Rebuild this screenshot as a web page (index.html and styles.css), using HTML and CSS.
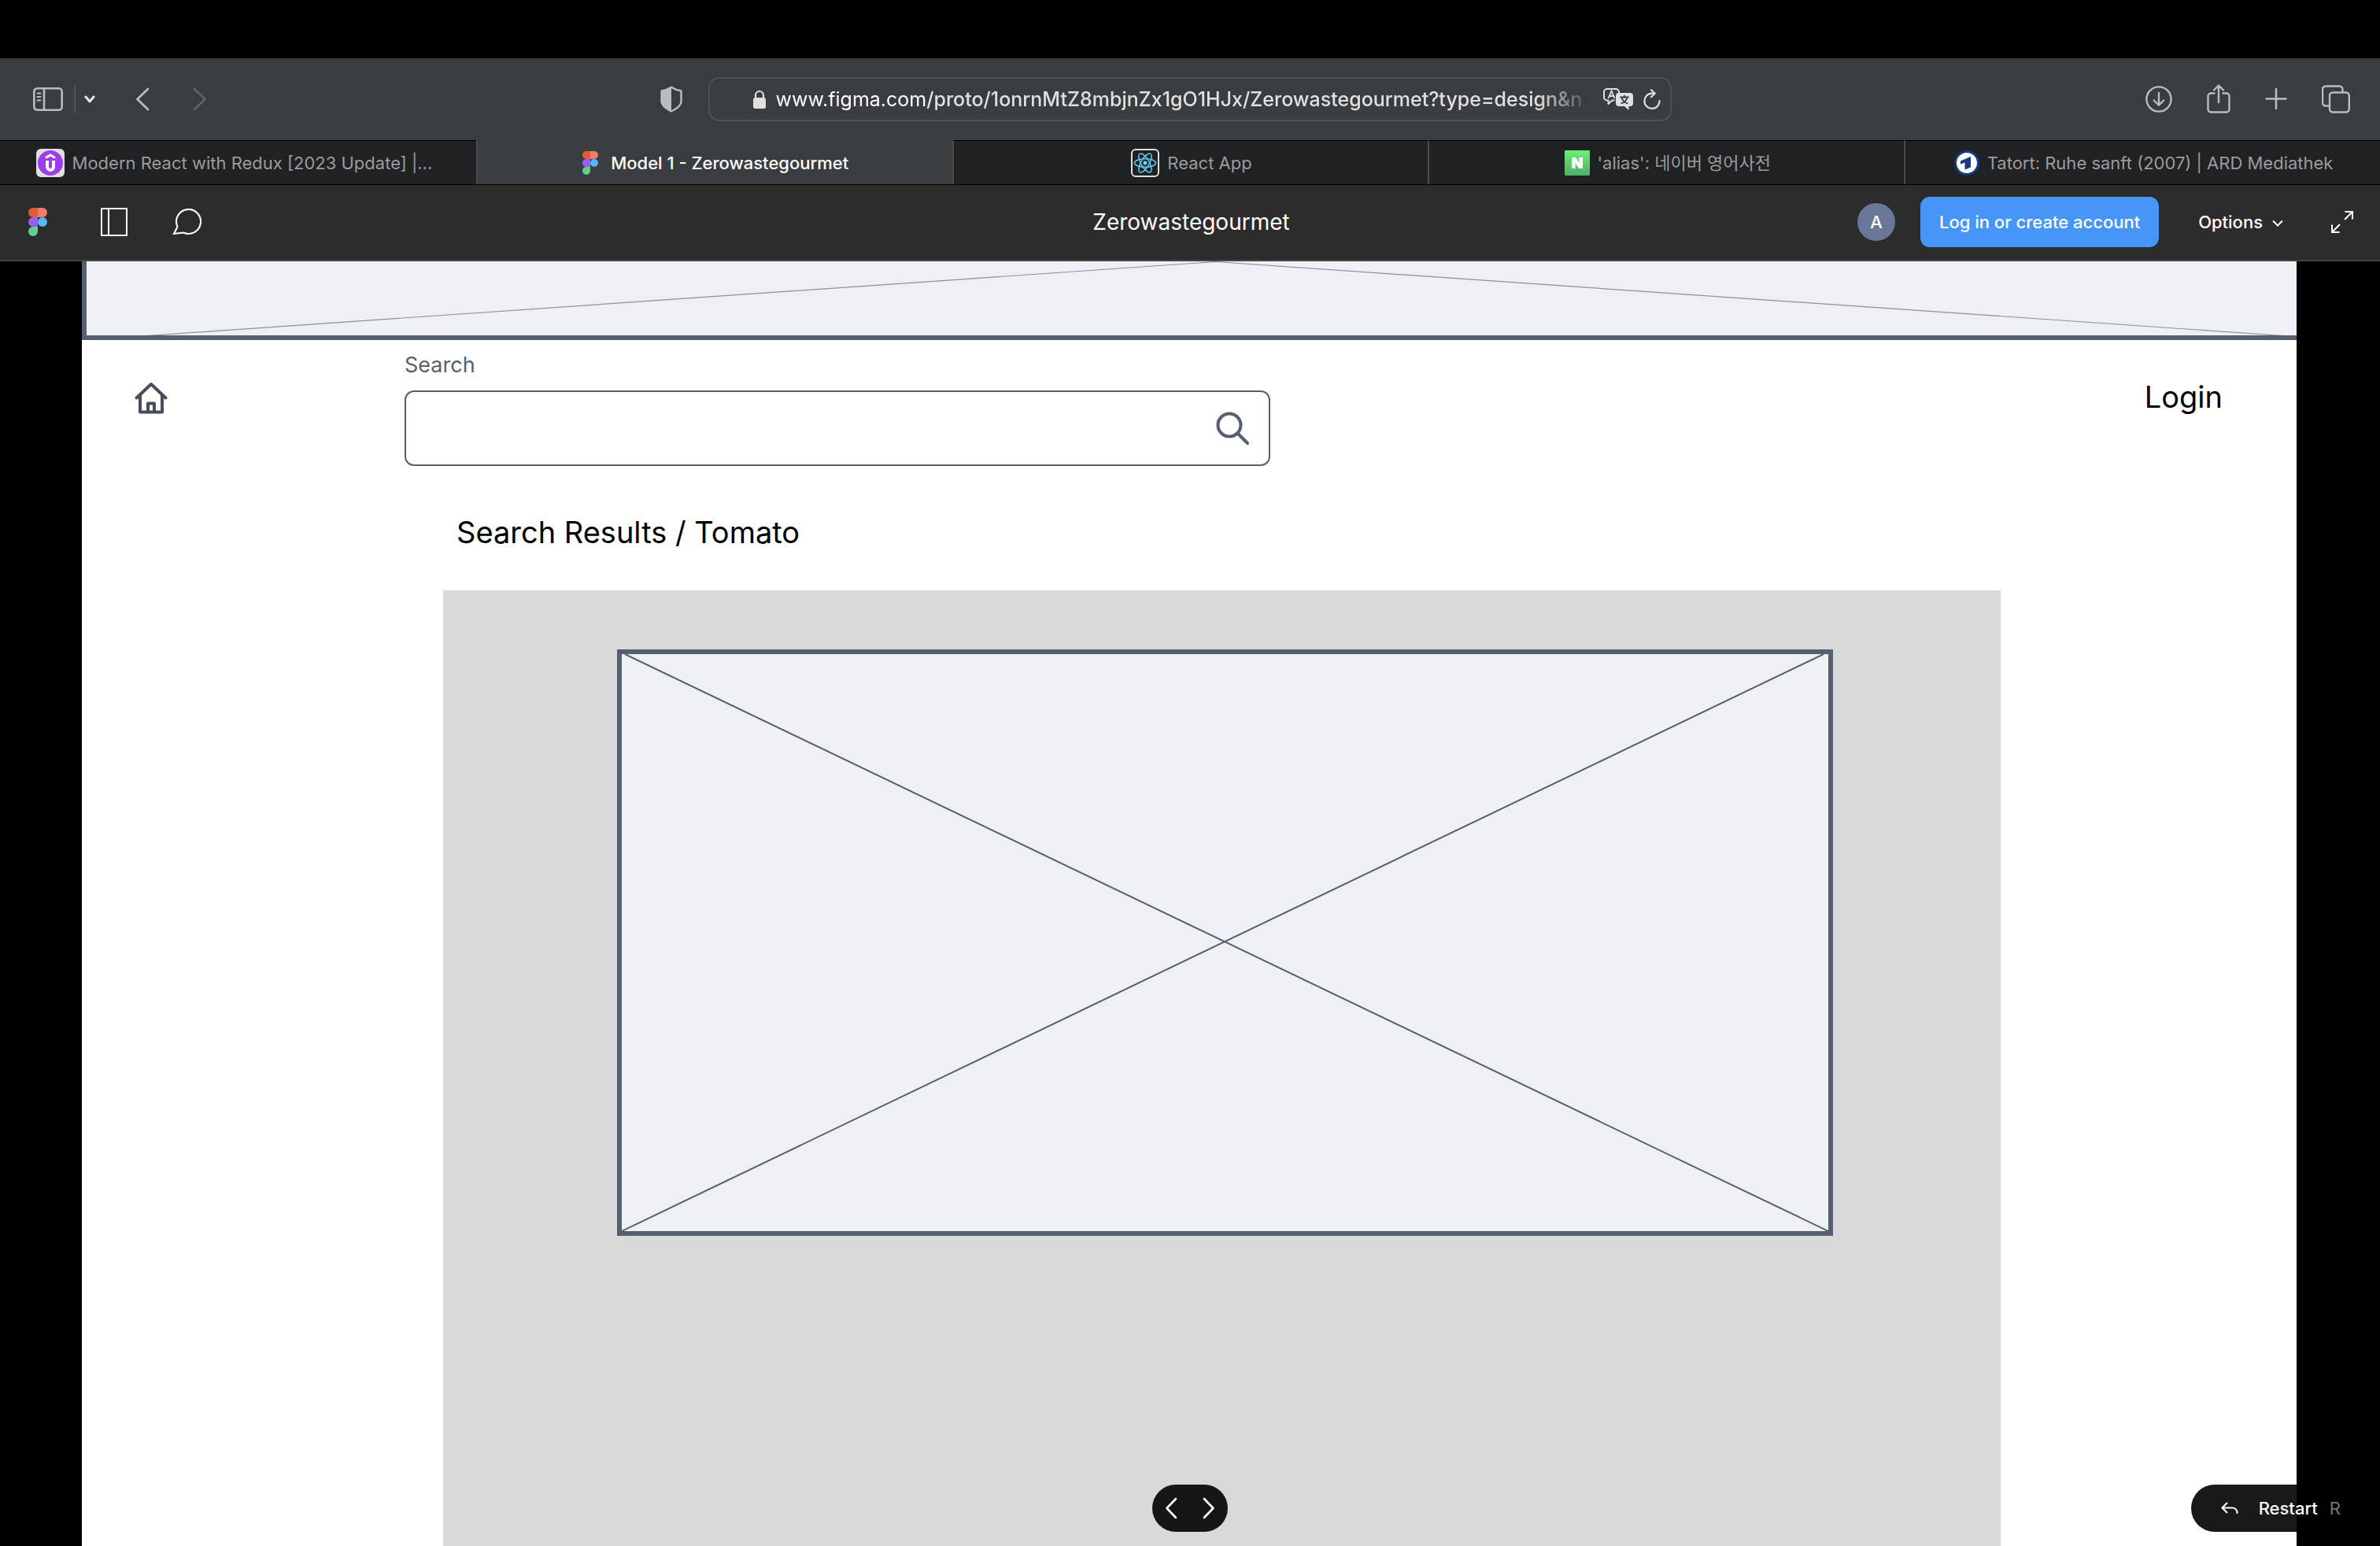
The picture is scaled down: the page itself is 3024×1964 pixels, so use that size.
FILE: index.html
```html
<!DOCTYPE html>
<html lang="en">
<head>
<meta charset="utf-8">
<title>Model 1 - Zerowastegourmet</title>
<link rel="stylesheet" href="styles.css">
</head>
<body>
<svg class="defs" width="0" height="0" aria-hidden="true">
  <symbol id="figma" viewBox="0 0 24 36">
    <path fill="#e25b32" d="M6 0h6v12H6A6 6 0 0 1 6 0z"/><path fill="#f07c6b" d="M12 0h6a6 6 0 0 1 0 12h-6z"/>
    <path fill="#9b5cf6" d="M6 12h6v12H6a6 6 0 0 1 0-12z"/><circle fill="#57b6f9" cx="18" cy="18" r="6"/>
    <path fill="#60cf8b" d="M6 24h6v6a6 6 0 1 1-6-6z"/>
  </symbol>
</svg>

<header class="browser">
  <div class="toolbar">
    <div class="tools tools-left">
      <button class="icon-btn" aria-label="Sidebar"><svg width="40" height="32" viewBox="0 0 40 32" fill="none" stroke="#b9bdbf" stroke-width="2.6"><rect x="2.3" y="2.3" width="35.4" height="27.4" rx="4"/><path d="M15 2v28"/><path stroke-width="2" stroke-linecap="round" d="M6.500 8.500h4M6.500 13h4M6.500 17.500h4"/></svg></button>
      <span class="divider"></span>
      <button class="icon-btn" aria-label="Tab groups"><svg width="14" height="12" viewBox="0 0 14 12" fill="none" stroke="#e6e7e7" stroke-width="3" stroke-linecap="round" stroke-linejoin="round"><path d="M2 3l5 6 5-6"/></svg></button>
      <button class="icon-btn back" aria-label="Back"><svg width="18" height="30" viewBox="0 0 18 30" fill="none" stroke="#b9bdbf" stroke-width="2.800" stroke-linecap="round" stroke-linejoin="round"><path d="M16 2L2.500 15 16 28"/></svg></button>
      <button class="icon-btn forward" aria-label="Forward"><svg width="18" height="30" viewBox="0 0 18 30" fill="none" stroke="#5f6366" stroke-width="2.800" stroke-linecap="round" stroke-linejoin="round"><path d="M2 2l13.500 13L2 28"/></svg></button>
    </div>
    <div class="address-area">
      <button class="icon-btn" aria-label="Privacy report"><svg width="30" height="34" viewBox="0 0 30 34"><path fill="none" stroke="#b9bdbf" stroke-width="2.400" stroke-linejoin="round" d="M15 1.800c4 2.700 8 4 12.500 4.700v13.500c0 5-6.500 9.500-12.500 12.500C9 29.500 2.500 25 2.500 20V6.500C7 5.800 11 4.500 15 1.800z"/><path fill="#b9bdbf" d="M15 1.800v30.700C9 29.500 2.500 25 2.500 20V6.500C7 5.800 11 4.500 15 1.800z"/></svg></button>
      <div class="address">
        <svg class="lock" width="18" height="24" viewBox="0 0 18 24"><rect x="1" y="10" width="16" height="14" rx="2.500" fill="#dfe0e0"/><path fill="none" stroke="#dfe0e0" stroke-width="2.200" d="M4 11V7a5 5 0 0 1 10 0v4"/></svg>
        <span class="url"><span class="host">www.figma.com</span>/proto/1onrnMtZ8mbjnZx1gO1HJx/Zerowastegourmet?type=design&amp;n</span>
        <button class="icon-btn" aria-label="Translate"><svg width="38" height="28" viewBox="0 0 38 28"><path fill="none" stroke="#dfe0e0" stroke-width="2" stroke-linejoin="round" d="M14.500 15.500h-3L6.500 20v-4.500H5a4 4 0 0 1-4-4V5a4 4 0 0 1 4-4h11a4 4 0 0 1 4 4v1"/><path fill="none" stroke="#dfe0e0" stroke-width="1.800" d="M6.500 13l4-9.500 4 9.500M8 10h5"/><path fill="#dfe0e0" d="M20 6h14a4 4 0 0 1 4 4v9a4 4 0 0 1-4 4h-1.500v5L27 23h-7a4 4 0 0 1-4-4v-9a4 4 0 0 1 4-4z"/><path fill="none" stroke="#393d40" stroke-width="1.800" d="M21.500 11.500h11M27 9v2.500M23.500 12c1 3.500 4 6.500 8 7.500M30.500 12c-1 3.500-4 6.500-8 7.500"/></svg></button>
        <button class="icon-btn" aria-label="Reload"><svg width="22" height="26" viewBox="0 0 22 26" fill="none" stroke="#dfe0e0" stroke-width="2.200" stroke-linecap="round" stroke-linejoin="round"><path d="M14.500 5.700H11A9.600 9.600 0 1 0 20.600 15"/><path d="M10 1.200l4.700 4.500L10 10.200"/></svg></button>
      </div>
    </div>
    <div class="tools tools-right">
      <button class="icon-btn" aria-label="Downloads"><svg width="34" height="34" viewBox="0 0 34 34" fill="none" stroke="#b9bdbf" stroke-width="2.400" stroke-linecap="round" stroke-linejoin="round"><circle cx="17" cy="17" r="15.600"/><path d="M17 9v15.500M10.800 18.500l6.200 6.200 6.200-6.200"/></svg></button>
      <button class="icon-btn" aria-label="Share"><svg width="30" height="38" viewBox="0 0 30 38" fill="none" stroke="#b9bdbf" stroke-width="2.400" stroke-linecap="round" stroke-linejoin="round"><path d="M9.500 11.500H5A3.500 3.500 0 0 0 1.500 15v17A3.500 3.500 0 0 0 5 35.500h20a3.500 3.500 0 0 0 3.500-3.500V15a3.500 3.500 0 0 0-3.500-3.500h-4.500M15 23V1.500M9 7.500l6-6 6 6"/></svg></button>
      <button class="icon-btn" aria-label="New tab"><svg width="28" height="28" viewBox="0 0 28 28" stroke="#b9bdbf" stroke-width="2.600" stroke-linecap="round"><path d="M14 1v25M1.500 13.500h25"/></svg></button>
      <button class="icon-btn" aria-label="Tab overview"><svg width="36" height="36" viewBox="0 0 36 36" fill="none" stroke="#b9bdbf" stroke-width="2.400"><rect x="10" y="9.500" width="24.800" height="25" rx="4"/><path d="M10 26.500H5a4 4 0 0 1-4-4V5.500a4 4 0 0 1 4-4h17.500a4 4 0 0 1 4 4v4"/></svg></button>
    </div>
  </div>
  <nav class="tabs">
    <a class="tab" href="#"><svg width="36" height="36" viewBox="0 0 36 36"><rect width="36" height="36" rx="6" fill="#dfdfdf"/><circle cx="18" cy="18" r="16" fill="#9a3eec"/><path fill="none" stroke="#fff" stroke-width="3" d="M12 11.500l6-3.500 6 3.500"/><path fill="none" stroke="#fff" stroke-width="4" d="M14 15v8a4 4 0 0 0 8 0v-8"/></svg><span>Modern React with Redux [2023 Update] |...</span></a>
    <a class="tab active" href="#"><svg width="20" height="30"><use href="#figma"/></svg><span>Model 1 - Zerowastegourmet</span></a>
    <a class="tab" href="#"><svg width="36" height="36" viewBox="0 0 36 36" fill="none" stroke="#61c9ef" stroke-width="1.500"><rect x="1" y="1" width="34" height="34" rx="5" stroke="#dedede" stroke-width="2"/><circle cx="18" cy="18" r="2.500" fill="#61dafb" stroke="none"/><ellipse cx="18" cy="18" rx="13.500" ry="5.200"/><ellipse cx="18" cy="18" rx="13.500" ry="5.200" transform="rotate(60 18 18)"/><ellipse cx="18" cy="18" rx="13.500" ry="5.200" transform="rotate(120 18 18)"/></svg><span>React App</span></a>
    <a class="tab" href="#"><svg width="32" height="32" viewBox="0 0 32 32"><defs><linearGradient id="ng" x2="0" y2="1"><stop stop-color="#6eee74"/><stop offset="1" stop-color="#50ad66"/></linearGradient></defs><rect width="32" height="32" rx="1" fill="url(#ng)"/><path fill="none" stroke="#fff" stroke-width="4.600" d="M11.300 23V9M20.700 23V9"/><path fill="#fff" d="M9 9h5l9 14h-5z"/></svg><span>'alias': 네이버 영어사전</span></a>
    <a class="tab" href="#"><svg width="32" height="32" viewBox="0 0 32 32"><circle cx="16" cy="16" r="14.500" fill="#fff" stroke="#143a86" stroke-width="3"/><path fill="#143a86" d="M8 13.500L21 8v13.500L13.500 24.500V15.500L8 17.500z"/></svg><span>Tatort: Ruhe sanft (2007) | ARD Mediathek</span></a>
  </nav>
</header>

<header class="app-bar">
  <div class="app-left">
    <a href="#" aria-label="Figma"><svg width="24" height="36"><use href="#figma"/></svg></a>
    <button class="icon-btn" aria-label="Toggle sidebar"><svg width="36" height="36" viewBox="0 0 36 36" fill="none" stroke="#fff" stroke-width="2"><path d="M2 1h32v34H2zM11 1v34"/></svg></button>
    <button class="icon-btn" aria-label="Comments"><svg width="38" height="34" viewBox="0 0 38 34" fill="none" stroke="#fff" stroke-width="2.100"><path d="M2 32l4.500-9A15.500 15.500 0 1 1 14 30.500z"/></svg></button>
  </div>
  <h1 class="app-title">Zerowastegourmet</h1>
  <div class="app-right">
    <span class="avatar">A</span>
    <button class="primary">Log in or create account</button>
    <button class="options">Options <svg width="14" height="10" viewBox="0 0 14 10" fill="none" stroke="#fff" stroke-width="2"><path d="M1 1.500l6 6 6-6"/></svg></button>
    <button class="icon-btn" aria-label="Full screen"><svg width="30" height="28" viewBox="0 0 30 28" fill="none" stroke="#fff" stroke-width="2"><path d="M18.500 1H28v9.500M28 1L18 11M11.500 27H2v-9.500M2 27l10-10"/></svg></button>
  </div>
</header>

<main class="stage">
  <div class="frame">
    <div class="banner">
      <svg width="100%" height="100%" viewBox="0 0 2808 94" preserveAspectRatio="none"><path d="M77 94.500L1434 .500 2791 94.500" fill="none" stroke="#8a91a1" stroke-width="1.200"/></svg>
    </div>
    <div class="page-head">
      <a class="home" href="#" aria-label="Home"><svg width="42" height="42" viewBox="0 0 42 42" fill="none" stroke="#464e5c" stroke-width="4" stroke-linejoin="round"><path stroke-linecap="round" d="M2.500 20.500L21 3l18.500 17.500"/><path d="M7 17v21.500h28V17"/><path d="M17 38V27.500h8V38"/></svg></a>
      <div class="search">
        <label for="q">Search</label>
        <div class="field">
          <input id="q" type="text">
          <svg width="44" height="44" viewBox="0 0 44 44" fill="none" stroke="#565f70" stroke-width="4" stroke-linecap="round"><circle cx="18" cy="18" r="14.500"/><path d="M29 29l12 12"/></svg>
        </div>
      </div>
      <a class="login" href="#">Login</a>
    </div>
    <h2 class="results-title">Search Results / Tomato</h2>
    <section class="results">
      <div class="placeholder">
        <svg width="100%" height="100%" viewBox="0 0 1533 733" preserveAspectRatio="none"><path d="M4 0L1533 733M1527 0L0 733" fill="none" stroke="#565f70" stroke-width="2"/></svg>
      </div>
    </section>
  </div>
  <div class="pager">
    <button class="icon-btn" aria-label="Previous"><svg width="16" height="28" viewBox="0 0 16 28" fill="none" stroke="#fff" stroke-width="2.600" stroke-linecap="round" stroke-linejoin="round"><path d="M14 2L2.500 14 14 26"/></svg></button>
    <button class="icon-btn" aria-label="Next"><svg width="16" height="28" viewBox="0 0 16 28" fill="none" stroke="#fff" stroke-width="2.600" stroke-linecap="round" stroke-linejoin="round"><path d="M2 2l11.500 12L2 26"/></svg></button>
  </div>
  <button class="restart"><svg width="22" height="16" viewBox="0 0 22 16" fill="none" stroke="#fff" stroke-width="2"><path d="M8 1L1.500 7.500 8 14M2 7.500h12.500a6 6 0 0 1 6 6V15"/></svg><span>Restart</span><kbd>R</kbd></button>
</main>
</body>
</html>
```
FILE: styles.css
```css
* { box-sizing: border-box; }

body {
  margin: 0;
  min-height: 100vh;
  display: flex;
  flex-direction: column;
  padding-top: 74px;
  background: #000;
  font-family: Inter, "Noto Sans CJK KR", sans-serif;
}

.defs { position: absolute; }
svg { display: block; flex: none; }
a { color: inherit; text-decoration: none; }
button { font: inherit; color: inherit; border: 0; background: none; padding: 0; }
.icon-btn { display: flex; flex: none; }

/* browser toolbar */
.toolbar {
  display: grid;
  grid-template-columns: 1fr auto 1fr;
  align-items: center;
  height: 104px;
  padding: 0 38px 0 41px;
  background: #393d40;
}
.tools { display: flex; align-items: center; }
.divider { width: 2px; height: 36px; margin: 0 11px 0 13px; background: #505456; }
.back { margin-left: 51px; }
.forward { margin-left: 55px; }
.tools-right { justify-content: flex-end; gap: 44px; }

.address-area { display: flex; align-items: center; gap: 32px; margin-right: 66px; }
.address {
  display: flex;
  align-items: center;
  width: 1224px;
  height: 56px;
  padding: 0 12px 0 54px;
  border: 2px solid #4e5255;
  border-radius: 14px;
}
.url {
  flex: 1;
  min-width: 0;
  margin: 0 4px 0 12px;
  overflow: hidden;
  white-space: nowrap;
  font-size: 25px;
  font-weight: 500;
  line-height: 36px;
  color: #dfe0e0;
  -webkit-mask-image: linear-gradient(90deg, #000 calc(100% - 80px), transparent calc(100% - 8px));
  mask-image: linear-gradient(90deg, #000 calc(100% - 80px), transparent calc(100% - 8px));
}
.host { font-weight: 400; color: #fff; }
.address .icon-btn + .icon-btn { margin-left: 13px; }

/* tabs */
.tabs {
  display: grid;
  grid-template-columns: repeat(5, 1fr);
  height: 57px;
  border-bottom: 1px solid #000;
  background: #202123;
}
.tab {
  display: flex;
  align-items: center;
  justify-content: center;
  gap: 10px;
  border-top: 1px solid #000;
  font-size: 22px;
  line-height: 28px;
  white-space: nowrap;
  color: #9b9c9d;
}
.tab + .tab { padding-left: 2px; border-left: 2px solid #4a4c4e; }
.tab:first-child { padding-right: 10px; }
.tab.active { gap: 16px; border-top-color: #393d40; background: #393d40; color: #fff; font-weight: 500; }

/* prototype viewer bar */
.app-bar {
  display: grid;
  grid-template-columns: 1fr auto 1fr;
  align-items: center;
  height: 97px;
  padding: 0 33px 2px 36px;
  border-bottom: 2px solid #444;
  background: #2c2c2c;
  color: #fff;
}
.app-left { display: flex; align-items: center; gap: 56px; }
.app-left a { margin-right: 11px; }
.app-title { margin: 0; font-size: 28px; font-weight: 400; }
.app-right { display: flex; align-items: center; justify-content: flex-end; font-size: 22px; font-weight: 500; }
.avatar {
  width: 48px;
  height: 48px;
  border-radius: 50%;
  background: #697798;
  line-height: 48px;
  text-align: center;
}
.primary { height: 64px; margin: 0 50px 0 32px; padding: 0 24px; border-radius: 12px; background: #4596f7; }
.options { display: flex; align-items: center; gap: 12px; margin-right: 60px; }
.options svg { margin-top: 4px; }

/* prototype frame */
.stage { position: relative; flex: 1; display: flex; padding: 0 106px 0 104px; }
.frame { flex: 1; display: flex; flex-direction: column; background: #fff; color: #000; }
.banner { height: 100px; border: solid #565f70; border-width: 0 0 6px 6px; background: #eef0f4; }
.page-head { display: flex; align-items: flex-start; padding: 16px 94px 0 67px; }
.home { margin-top: 37px; }
.search { width: 1100px; margin-left: 301px; }
.search label { display: block; font-size: 27px; line-height: 32px; color: #565f70; }
.field {
  display: flex;
  align-items: center;
  height: 96px;
  margin-top: 16px;
  padding: 0 24px;
  border: 2px solid #565f70;
  border-radius: 12px;
}
.field input { flex: 1; min-width: 0; height: 100%; border: 0; outline: 0; background: none; font: inherit; font-size: 27px; }
.login { margin: 32px 0 0 auto; font-size: 38px; line-height: 48px; }
.results-title { margin: 60px 0 50px 476px; font-size: 38px; line-height: 48px; font-weight: 400; }
.results { flex: 1; margin: 0 376px 0 459px; padding: 75px 213px 0 221px; background: #d9d9d9; }
.placeholder { height: 745px; border: 6px solid #565f70; background: #eef0f4; }

/* floating controls */
.pager, .restart {
  position: absolute;
  bottom: 18px;
  display: flex;
  align-items: center;
  height: 60px;
  border-radius: 30px;
  background: rgba(0, 0, 0, 0.9);
  color: #fff;
}
.pager { left: calc(50% - 48px); width: 96px; justify-content: center; gap: 32px; }
.restart { right: 20px; padding: 0 30px 0 38px; font-size: 22px; font-weight: 500; }
.restart span { margin: 0 15px 0 26px; }
.restart kbd { font: inherit; font-weight: 400; color: #777; }
```
